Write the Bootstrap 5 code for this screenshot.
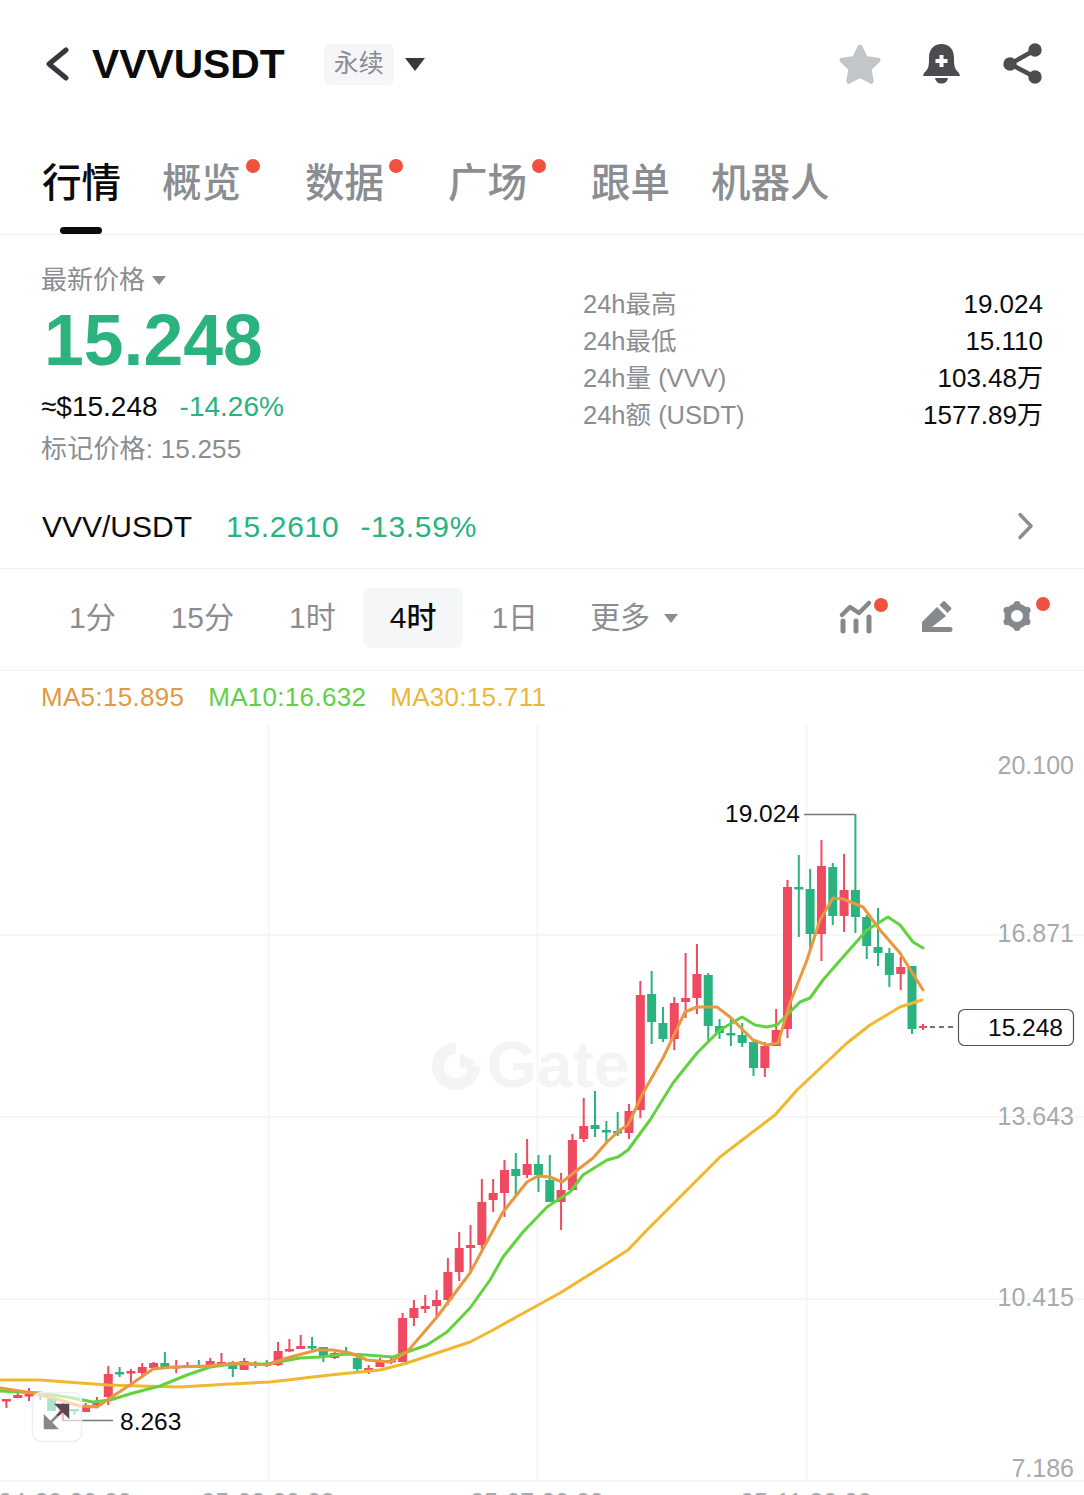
<!DOCTYPE html>
<html lang="zh">
<head>
    <meta charset="UTF-8" />
    <title>VVVUSDT</title>
    <link href="https://cdn.jsdelivr.net/npm/bootstrap@5.3.3/dist/css/bootstrap.min.css" rel="stylesheet">
    <style>
        html, body { height: 1495px; overflow: hidden; }
        body { font-family: "Liberation Sans", "Noto Sans CJK SC", sans-serif; color: #0b0b0c; background: #fff; }
        .muted { color: #8a8d91; }
        .up { color: #2ab27f; }
        .top-bar { height: 130px; padding: 0 40px 2px 45px; }
        .pair-title { font-size: 40.8px; font-weight: 700; margin-left: 23px; line-height: 1; }
        .perp-chip { width: 70px; height: 41px; margin-left: 39px; background: #f5f6f7; border-radius: 6px; font-size: 25px; }
        .caret-lg { width: 0; height: 0; margin-left: 11px; border-left: 10px solid transparent; border-right: 10px solid transparent; border-top: 13px solid #35383c; }
        .caret-sm { width: 0; height: 0; border-left: 7px solid transparent; border-right: 7px solid transparent; border-top: 9px solid #8a8d91; }
        .bell-ico { margin-left: 39px; }
        .share-ico { margin-left: 40px; }
        .tab-row { height: 105px; padding: 25px 0 0 42px; gap: 42px; border-bottom: 1px solid #f0f1f2; }
        .tab-item { position: relative; font-size: 39.5px; font-weight: 500; line-height: 56px; height: 56px; color: #8a8d91; width: 78px; box-sizing: content-box; white-space: nowrap; }
        .tab-item.wide { width: 118px; }
        .tab-item.dotted { padding-right: 23px; }
        .tab-item.on { color: #0b0b0c; }
        .tab-item.on::after { content: ""; position: absolute; left: 18px; top: 72px; width: 42px; height: 7px; border-radius: 4px; background: #0b0b0c; }
        .red-dot { position: absolute; width: 14px; height: 14px; border-radius: 50%; background: #f0523f; }
        .tab-item .red-dot { left: 84px; top: 4px; }
        .stats-box { height: 231px; padding: 0 41px; }
        .stats-left { width: 542px; padding-top: 25px; }
        .stats-right { flex: 1; padding-top: 51px; }
        .last-label { font-size: 26px; line-height: 40px; gap: 7px; }
        .big-price { font-size: 71.5px; font-weight: 700; line-height: 80px; margin-left: 3px; color: #2ab27f; }
        .sub-price { font-size: 28px; line-height: 40px; margin-top: 7px; gap: 22px; }
        .mark-price { font-size: 26px; line-height: 40px; margin-top: 2px; letter-spacing: .2px; }
        .stat-row { font-size: 26px; line-height: 37px; }
        .stat-row .muted { font-size: 25.5px; }
        .spot-row { height: 103px; padding: 18px 50px 0 42px; font-size: 30px; border-bottom: 1px solid #f0f1f2; }
        .spot-row .up { margin-left: 34px; letter-spacing: .7px; }
        .spot-row .up + .up { margin-left: 21px; }
        .tf-row { height: 102px; padding: 0 34px 3px 69px; border-bottom: 1px solid #f0f1f2; font-size: 30px; }
        .tf-item { color: #8a8d91; line-height: 60px; margin-right: 55px; white-space: nowrap; }
        .tf-item.on { background: #f5f6f7; border-radius: 8px; color: #0b0b0c; padding: 0 27px; margin-left: -28px; margin-right: 28px; font-weight: 500; }
        .tf-item.before-last { margin-right: 52px; }
        .tf-item.last-item { margin-right: 0; }
        .tf-item .caret-sm { margin-left: 14px; }
        .ma-row { height: 50px; padding: 3px 0 0 41px; gap: 24px; font-size: 26px; letter-spacing: .3px; }
        .ma-five { color: #e09a45; }
        .ma-ten { color: #62cf45; }
        .ma-thirty { color: #ecb637; }
        .chart-svg { display: block; width: 1084px; height: 774px; }
        .axis-txt { font-size: 25px; fill: #a7aaae; text-anchor: end; }
        .mark-txt { font-size: 24.5px; fill: #0b0b0c; }
        .date-txt { font-size: 25px; fill: #a7aaae; text-anchor: middle; }
        .logo-txt { font-size: 64px; font-weight: 700; fill: #f3f4f5; }
    </style>
</head>
<body>
    <!-- header -->
    <div class="top-bar d-flex align-items-center">
        <svg width="24" height="34" viewBox="0 0 24 34"><path d="M21 3 L4 17 L21 31" fill="none" stroke="#35383c" stroke-width="5" stroke-linecap="round" stroke-linejoin="round"/></svg>
        <div class="pair-title">VVVUSDT</div>
        <div class="perp-chip d-flex align-items-center justify-content-center muted">永续</div>
        <div class="caret-lg"></div>
        <div class="ms-auto d-flex align-items-center">
            <svg width="46" height="44" viewBox="837 41 46 44"><path d="M860 46 L865.5 57.5 L878 59.2 L869 67.8 L871.2 80.2 L860 74.2 L848.8 80.2 L851 67.8 L842 59.2 L854.5 57.5 Z" fill="#c3c6c8" stroke="#c3c6c8" stroke-width="5" stroke-linejoin="round"/></svg>
            <svg class="bell-ico" width="40" height="42" viewBox="922 42 40 42"><path d="M923 75 Q923 72 926 70 Q929 67 929 60 V57 C929 48 934 43 941.5 43 C949 43 954 48 954 57 V60 Q954 67 957 70 Q960 72 960 75 Z" fill="#4a4c50"/><path d="M935 77 H948 C947 81 945 82.500 941.500 82.500 C938 82.500 936 81 935 77 Z" fill="#4a4c50"/><path d="M941.500 54 V66 M935.500 60 H947.500" stroke="#fff" stroke-width="4"/></svg>
            <svg class="share-ico" width="42" height="42" viewBox="1002 42 42 42"><path d="M1035 49 L1010 63 L1035 76" fill="none" stroke="#4a4c50" stroke-width="4.500"/><circle cx="1035" cy="49" r="6.700" fill="#4a4c50"/><circle cx="1010" cy="63" r="6.700" fill="#4a4c50"/><circle cx="1035" cy="76" r="6.700" fill="#4a4c50"/></svg>
        </div>
    </div>

    <!-- tabs -->
    <div class="tab-row d-flex">
        <div class="tab-item on">行情</div>
        <div class="tab-item dotted">概览<span class="red-dot"></span></div>
        <div class="tab-item dotted">数据<span class="red-dot"></span></div>
        <div class="tab-item dotted">广场<span class="red-dot"></span></div>
        <div class="tab-item">跟单</div>
        <div class="tab-item wide">机器人</div>
    </div>

    <!-- price block -->
    <div class="stats-box d-flex">
        <div class="stats-left">
            <div class="last-label d-flex align-items-center muted">最新价格 <span class="caret-sm"></span></div>
            <div class="big-price">15.248</div>
            <div class="sub-price d-flex"><span>≈$15.248</span><span class="up">-14.26%</span></div>
            <div class="mark-price muted">标记价格: 15.255</div>
        </div>
        <div class="stats-right">
            <div class="stat-row d-flex justify-content-between"><span class="muted">24h最高</span><span>19.024</span></div>
            <div class="stat-row d-flex justify-content-between"><span class="muted">24h最低</span><span>15.110</span></div>
            <div class="stat-row d-flex justify-content-between"><span class="muted">24h量 (VVV)</span><span>103.48万</span></div>
            <div class="stat-row d-flex justify-content-between"><span class="muted">24h额 (USDT)</span><span>1577.89万</span></div>
        </div>
    </div>

    <div class="spot-row d-flex align-items-center">
        <span>VVV/USDT</span>
        <span class="up">15.2610</span>
        <span class="up">-13.59%</span>
        <svg class="ms-auto" width="17" height="28" viewBox="0 0 17 28"><path d="M3 2.500 L14 14 L3 25.500" fill="none" stroke="#8a8d91" stroke-width="3.500" stroke-linecap="round" stroke-linejoin="round"/></svg>
    </div>

    <!-- timeframes -->
    <div class="tf-row d-flex align-items-center">
        <span class="tf-item">1分</span>
        <span class="tf-item">15分</span>
        <span class="tf-item">1时</span>
        <span class="tf-item on">4时</span>
        <span class="tf-item before-last">1日</span>
        <span class="tf-item last-item d-flex align-items-center">更多<span class="caret-sm"></span></span>
        <svg class="ms-auto" width="216" height="50" viewBox="834 596 216 50">
            <path d="M842 618 L850 610 L859 616 L869 606" fill="none" stroke="#85888c" stroke-width="4.500" stroke-linecap="round" stroke-linejoin="round"/>
            <path d="M843 624 V634 M856 624 V634 M869 620 V634" stroke="#85888c" stroke-width="5" stroke-linecap="round"/>
            <circle cx="881" cy="608" r="7" fill="#f0523f"/>
            <path d="M922 625 L937 610 L946 619 L932 630 H950 Q952.500 630 952.500 632.500 Q952.500 635 950 635 H922 Z" fill="#85888c"/>
            <path d="M939.500 608 L943 604.500 Q944 603.500 945 604.500 L951 610.500 Q952 611.500 951 612.500 L947.500 616 Z" fill="#85888c"/>
            <circle cx="1017" cy="619" r="9.250" fill="none" stroke="#85888c" stroke-width="6.500"/>
            <g stroke="#85888c" stroke-width="7" stroke-linecap="round">
                <path d="M1017 607.500 V607.500"/>
                <path d="M1017 630.500 V630.500"/>
                <path d="M1027 613.200 L1027 613.200"/>
                <path d="M1007 613.200 L1007 613.200"/>
                <path d="M1027 624.800 L1027 624.800"/>
                <path d="M1007 624.800 L1007 624.800"/>
            </g>
            <circle cx="1043" cy="607" r="7" fill="#f0523f"/>
        </svg>
    </div>

    <div class="ma-row d-flex align-items-center">
        <span class="ma-five">MA5:15.895</span>
        <span class="ma-ten">MA10:16.632</span>
        <span class="ma-thirty">MA30:15.711</span>
    </div>

    <!-- kline, viewBox uses page coordinates -->
    <svg class="chart-svg" id="kline" viewBox="0 721 1084 774" xmlns="http://www.w3.org/2000/svg">
        <path d="M0 935 H1084 M0 1117 H1084 M0 1299 H1084 M0 1481 H1084 M268.500 725 V1481 M537.500 725 V1481 M806.500 725 V1481" stroke="#f3f4f5" stroke-width="1.500" fill="none"/>
        <path d="M456 1048 A18 18 0 1 0 474 1066" fill="none" stroke="#f3f4f5" stroke-width="12"/>
        <path d="M460 1053 L476 1062 L470 1068 H460 Z" fill="#f3f4f5"/>
        <text class="logo-txt" x="487" y="1087">Gate</text>
        <g id="candles"></g>
        <g id="maLines" fill="none" stroke-width="3" stroke-linejoin="round" stroke-linecap="round"></g>

        <text class="axis-txt" x="1074" y="774">20.100</text>
        <text class="axis-txt" x="1074" y="942">16.871</text>
        <text class="axis-txt" x="1074" y="1125">13.643</text>
        <text class="axis-txt" x="1074" y="1306">10.415</text>
        <text class="axis-txt" x="1074" y="1477">7.186</text>

        <text class="mark-txt" x="725" y="822">19.024</text>
        <path d="M804 814.500 H855" stroke="#777" stroke-width="1.500" fill="none"/>
        <text class="mark-txt" x="120" y="1430">8.263</text>
        <path d="M62 1420.500 H113" stroke="#777" stroke-width="1.500" fill="none"/>

        <path d="M919 1027 H927 M923 1024 V1030" stroke="#ef4a60" stroke-width="2"/>
        <path d="M930 1027 H957" stroke="#444" stroke-width="1.500" stroke-dasharray="5 4"/>
        <rect x="958.500" y="1009.500" width="115" height="36" rx="6" fill="#fff" stroke="#555" stroke-width="1.200"/>
        <text class="mark-txt" x="1063" y="1036" text-anchor="end">15.248</text>

        <rect x="32.500" y="1392.500" width="49" height="49" rx="9" fill="#fff" fill-opacity=".62" stroke="#eeeff0" stroke-width="1.500"/>
        <path d="M45 1428 V1417 L56 1428 Z M49 1424 L57 1416" fill="#85888c" stroke="#85888c" stroke-width="2.500"/>
        <path d="M68 1405 H57 L68 1416 Z M64 1409 L57 1416" fill="#5c4650" stroke="#5c4650" stroke-width="2.500"/>

        <text class="date-txt" x="65" y="1511">04-29 20:00</text>
        <text class="date-txt" x="268" y="1511">05-03 20:00</text>
        <text class="date-txt" x="537" y="1511">05-07 20:00</text>
        <text class="date-txt" x="806" y="1511">05-11 20:00</text>
    </svg>

    <script src="https://cdn.jsdelivr.net/npm/bootstrap@5.3.3/dist/js/bootstrap.bundle.min.js"></script>
    <script>
        // newest first: type, wick top, wick bottom, body top, body bottom
        const bars = [
            ['g',966,1034,966,1029],['r',957,990,967,974],['g',948,987,953,975],['g',908,966,947,953],['g',915,959,917,946],
            ['g',814,933,890,917],['r',854,932,890,916],['g',863,925,867,916],['r',840,961,866,934],['g',869,951,889,934],
            ['g',855,937,887,889],['r',880,1038,887,1029],['r',1009,1046,1030,1046],['r',1042,1077,1046,1068],['g',1042,1076,1042,1068],
            ['g',1023,1047,1035,1043],['g',1019,1046,1033,1035],['g',1019,1039,1026,1033],['g',973,1043,975,1026],['r',944,1014,974,998],
            ['r',953,1018,998,1002],['r',997,1050,1003,1039],['g',1007,1042,1023,1039],['g',971,1044,994,1022],['r',981,1118,995,1110],
            ['r',1104,1139,1111,1133],['g',1112,1136,1131,1133],['g',1121,1142,1130,1132],['g',1091,1137,1125,1129],['r',1098,1142,1126,1139],
            ['r',1134,1191,1140,1190],['r',1173,1230,1190,1202],['g',1155,1202,1180,1202],['g',1155,1192,1164,1175],['r',1139,1178,1164,1175],
            ['g',1153,1197,1169,1176],['r',1160,1217,1170,1193],['r',1179,1212,1193,1200],['r',1179,1250,1202,1245],['r',1225,1273,1245,1248],
            ['r',1232,1281,1248,1272],['r',1258,1305,1272,1300],['r',1290,1317,1300,1306],['r',1295,1313,1306,1309],['r',1300,1326,1308,1318],
            ['r',1313,1362,1318,1362],['r',1358,1364,1360,1362],['r',1358,1367,1362,1367],['r',1365,1374,1368,1370],['g',1353,1371,1358,1369],
            ['g',1347,1355,1352,1354],['r',1352,1359,1353,1358],['g',1347,1362,1347,1357],['g',1337,1350,1346,1348],['r',1335,1349,1346,1349],
            ['r',1339,1352,1349,1351],['r',1342,1366,1351,1365],['g',1360,1367,1363,1366],['g',1361,1368,1363,1365],['r',1358,1370,1361,1370],
            ['g',1361,1377,1362,1369],['r',1353,1364,1362,1364],['r',1358,1367,1361,1365],['g',1360,1368,1365,1367],['r',1362,1368,1365,1367],
            ['r',1360,1373,1366,1368],['g',1352,1367,1363,1367],['r',1362,1369,1363,1368],['r',1363,1378,1367,1373],['r',1369,1385,1371,1373],
            ['g',1367,1377,1372,1374],['r',1366,1405,1374,1397],['r',1397,1407,1403,1405],['r',1403,1412,1406,1412],['g',1409,1415,1409,1411],
            ['r',1403,1420,1405,1415],['g',1398,1411,1398,1411],['g',1392,1400,1392,1394],['r',1388,1401,1394,1396],['r',1392,1398,1395,1398],
            ['r',1399,1408,1399,1401]
        ];
        let candleSvg = '';
        bars.forEach((b, k) => {
            const x = 912 - 11.32 * k;
            const color = b[0] === 'r' ? '#ef4a60' : '#2ab27f';
            candleSvg += `<rect x="${x - 1}" y="${b[1]}" width="2" height="${b[2] - b[1]}" fill="${color}"/>`;
            candleSvg += `<rect x="${x - 4.5}" y="${b[3]}" width="9" height="${Math.max(b[4] - b[3], 2.5)}" fill="${color}"/>`;
        });
        document.getElementById('candles').innerHTML = candleSvg;

        const maLines = {
            '#f0b72f': [[0,1380],[40,1380],[80,1383],[108,1385],[140,1386],[180,1387],[230,1384],[270,1382],[330,1375],[380,1370],[407,1363],[440,1352],[470,1342],[493,1330],[520,1315],[560,1293],[600,1268],[628,1250],[647,1230],[680,1197],[720,1157],[775,1115],[797,1090],[847,1043],[870,1025],[900,1007],[922,1000]],
            '#62d241': [[0,1391],[40,1393],[67,1397],[93,1402],[110,1400],[133,1393],[160,1386],[187,1375],[210,1367],[233,1364],[267,1364],[300,1358],[320,1357],[347,1354],[367,1355],[393,1357],[407,1352],[427,1345],[447,1332],[470,1308],[490,1280],[503,1257],[523,1232],[547,1207],[570,1192],[583,1175],[607,1160],[618,1157],[628,1150],[650,1120],[673,1083],[697,1053],[720,1030],[742,1017],[755,1025],[767,1027],[777,1025],[790,1012],[800,1002],[810,998],[823,980],[843,957],[867,930],[888,917],[900,925],[913,942],[923,948]],
            '#e8983f': [[0,1388],[33,1393],[60,1400],[80,1406],[97,1407],[110,1398],[130,1385],[153,1369],[173,1367],[207,1366],[240,1363],[267,1365],[287,1358],[317,1350],[333,1350],[350,1353],[367,1360],[390,1362],[407,1352],[437,1317],[470,1273],[503,1212],[527,1182],[538,1176],[550,1177],[562,1182],[580,1168],[593,1158],[607,1142],[620,1130],[628,1125],[643,1093],[663,1058],[673,1037],[685,1012],[697,1007],[717,1007],[730,1017],[743,1030],[753,1040],[767,1045],[778,1043],[790,1003],[807,960],[820,920],[833,898],[843,899],[863,907],[880,930],[900,953],[923,990]]
        };
        let lineSvg = '';
        Object.keys(maLines).forEach(color => {
            lineSvg += `<polyline stroke="${color}" points="${maLines[color].map(p => p.join(',')).join(' ')}"/>`;
        });
        document.getElementById('maLines').innerHTML = lineSvg;
    </script>
</body>
</html>
